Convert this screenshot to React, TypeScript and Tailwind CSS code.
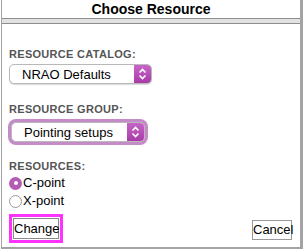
import { useState } from 'react';

function Chevrons() {
  return (
    <svg width="9" height="14" viewBox="0 0 9 14" fill="none" stroke="white" strokeWidth="1.6">
      <path d="M1.5 5.5 L4.5 2.5 L7.5 5.5" />
      <path d="M1.5 8.5 L4.5 11.5 L7.5 8.5" />
    </svg>
  );
}

function Select({ value, className = '' }: { value: string; className?: string }) {
  return (
    <div
      className={`flex h-[20px] items-stretch overflow-hidden rounded-[5px] border border-[#b9b9b9] bg-white shadow-[0_1px_1px_rgba(0,0,0,0.15)] ${className}`}
    >
      <span className="flex-1 pl-[12px] text-[13px] leading-[19px] text-black">{value}</span>
      <span className="flex w-[17px] items-center justify-center bg-gradient-to-b from-[#c766c7] to-[#a83aa8]">
        <Chevrons />
      </span>
    </div>
  );
}

function Radio({ label, checked, onClick }: { label: string; checked: boolean; onClick: () => void }) {
  return (
    <button type="button" onClick={onClick} className="flex h-[18px] items-center gap-[1px] text-left">
      {checked ? (
        <span className="flex h-[13px] w-[13px] items-center justify-center rounded-full bg-[#b35cb3]">
          <span className="h-[4px] w-[4px] rounded-full bg-white" />
        </span>
      ) : (
        <span className="h-[13px] w-[13px] rounded-full border border-[#9a9a9a] bg-white" />
      )}
      <span className="text-[13px] leading-[16px] text-black">{label}</span>
    </button>
  );
}

export default function App() {
  const [res, setRes] = useState('C-point');
  return (
    <div
      className="h-[251px] w-[304px] overflow-hidden bg-white"
      style={{ fontFamily: '"Liberation Sans", Arial, sans-serif' }}
    >
      <div className="ml-px mr-px flex h-[249px] flex-col border-l border-r-[3px] border-b-2 border-[#a3a3a3] bg-white">
        <div className="h-[18px] text-center text-[14px] font-bold leading-[19px] text-black">
          Choose Resource
        </div>
        <div className="h-[6px] border-y border-[#8e8e8e] bg-[#e2e2e2]" />
        <div className="flex flex-1 flex-col px-[7px]">
          <div className="mt-[24px] text-[11px] font-bold leading-[13px] tracking-[0.3px] text-[#555]">
            RESOURCE CATALOG:
          </div>
          <Select value="NRAO Defaults" className="mt-[3px] w-[143px]" />
          <div className="mt-[19px] text-[11px] font-bold leading-[13px] tracking-[0.3px] text-[#555]">
            RESOURCE GROUP:
          </div>
          <Select
            value="Pointing setups"
            className="mt-[6px] ml-[2px] w-[134px] ring-[3px] ring-[#c58ac8]"
          />
          <div className="mt-[18px] text-[11px] font-bold leading-[13px] tracking-[0.3px] text-[#555]">
            RESOURCES:
          </div>
          <div className="mt-px flex flex-col">
            <Radio label="C-point" checked={res === 'C-point'} onClick={() => setRes('C-point')} />
            <Radio label="X-point" checked={res === 'X-point'} onClick={() => setRes('X-point')} />
          </div>
          <div className="mt-[4px] flex items-start justify-between pr-px">
            <button
              type="button"
              className="ml-[4px] mt-[4px] h-[21px] w-[46px] border border-[#8a8a8a] bg-white text-[13px] leading-[19px] text-black outline-[3px] outline-offset-[1px] outline-[#ff33ff] outline-solid"
            >
              Change
            </button>
            <button
              type="button"
              className="mt-[6px] h-[20px] w-[40px] border border-[#9a9a9a] bg-white text-[13px] leading-[18px] text-black"
            >
              Cancel
            </button>
          </div>
        </div>
      </div>
    </div>
  );
}
